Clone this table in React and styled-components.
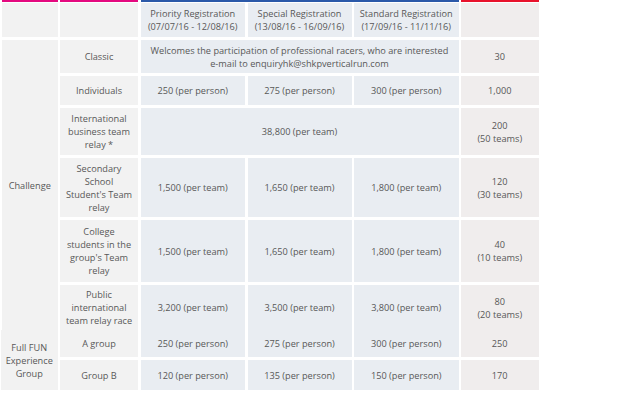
import React from 'react';
import styled, { createGlobalStyle } from 'styled-components';

const GlobalStyle = createGlobalStyle`
  html, body {
    margin: 0;
    padding: 0;
    background: #fff;
  }
  body {
    font-family: "Open Sans", "Liberation Sans", sans-serif;
  }
`;

const COLUMNS = '55.5px 78px 104.5px 104px 104.5px 77.5px';

const Wrapper = styled.div`
  width: 633px;
  height: 420px;
  padding-left: 2px;
  box-sizing: border-box;
`;

const Bars = styled.div`
  display: grid;
  grid-template-columns: ${COLUMNS};
  column-gap: 2.5px;
  height: 2px;
  margin-bottom: 1px;
`;

const Bar = styled.div`
  background: ${(props) => props.color};
  grid-column: ${(props) => props.span || 'auto'};
`;

const Table = styled.div`
  display: grid;
  grid-template-columns: ${(props) => props.columns || COLUMNS};
  grid-template-rows: ${(props) => props.rows};
  column-gap: 2.5px;
  row-gap: 3px;
  margin-left: ${(props) => props.shift || 0};
`;

const bg = {
  label: '#f2f2f2',
  price: '#e9edf2',
  quota: '#f0eded',
};

const Cell = styled.div`
  display: flex;
  align-items: center;
  justify-content: center;
  text-align: center;
  padding: 0 ${(props) => (props.kind === 'label' ? '5px' : '2px')};
  background: ${(props) => bg[props.kind || 'price']};
  color: #585858;
  font-size: 9.2px;
  line-height: 13px;
  grid-column: ${(props) => props.col || 'auto'};
  grid-row: ${(props) => props.row || 'auto'};
`;

const PRICE_ROWS = [
  { name: 'Individuals', prices: ['250 (per person)', '275 (per person)', '300 (per person)'], quota: '1,000' },
  { name: 'International business team relay *', single: '38,800 (per team)', quota: ['200', '(50 teams)'] },
  { name: "Secondary School Student's Team relay", prices: ['1,500 (per team)', '1,650 (per team)', '1,800 (per team)'], quota: ['120', '(30 teams)'] },
  { name: "College students in the group's Team relay", prices: ['1,500 (per team)', '1,650 (per team)', '1,800 (per team)'], quota: ['40', '(10 teams)'] },
  { name: 'Public international team relay race', prices: ['3,200 (per team)', '3,500 (per team)', '3,800 (per team)'], quota: ['80', '(20 teams)'] },
];

const FUN_ROWS = [
  { name: 'A group', prices: ['250 (per person)', '275 (per person)', '300 (per person)'], quota: '250' },
  { name: 'Group B', prices: ['120 (per person)', '135 (per person)', '150 (per person)'], quota: '170' },
];

const Lines = ({ value }) => (Array.isArray(value)
  ? <span>{value[0]}<br />{value[1]}</span>
  : value);

const renderRow = (row) => [
  <Cell kind="label" key={`${row.name}-n`}>{row.name}</Cell>,
  ...(row.single
    ? [<Cell key={`${row.name}-s`} col="span 3">{row.single}</Cell>]
    : row.prices.map((p, i) => <Cell key={`${row.name}-${i}`}>{p}</Cell>)),
  <Cell kind="quota" key={`${row.name}-q`}><Lines value={row.quota} /></Cell>,
];

export default function App() {
  return (
    <Wrapper>
      <GlobalStyle />
      <Bars>
        <Bar color="#e4097f" />
        <Bar color="#e4097f" />
        <Bar color="#2b59a9" span="span 3" />
        <Bar color="#e8122c" />
      </Bars>
      <Table rows="34px 33px 29px 47px 59px 62px 45px">
        <Cell kind="label" />
        <Cell kind="label" />
        <Cell>Priority Registration<br />(07/07/16 - 12/08/16)</Cell>
        <Cell>Special Registration<br />(13/08/16 - 16/09/16)</Cell>
        <Cell>Standard Registration<br />(17/09/16 - 11/11/16)</Cell>
        <Cell kind="quota" />

        <Cell kind="label" row="span 6">Challenge</Cell>
        <Cell kind="label">Classic</Cell>
        <Cell col="span 3">
          <span>
            Welcomes the participation of professional racers, who are interested
            <br />
            e-mail to enquiryhk@shkpverticalrun.com
          </span>
        </Cell>
        <Cell kind="quota">30</Cell>
        {PRICE_ROWS.map(renderRow)}
      </Table>
      <Table rows="27px 30px" columns="56.5px 78px 104.5px 104px 104.5px 77.5px" shift="-1px">
        <Cell kind="label" row="span 2">Full FUN Experience Group</Cell>
        {FUN_ROWS.map(renderRow)}
      </Table>
    </Wrapper>
  );
}
